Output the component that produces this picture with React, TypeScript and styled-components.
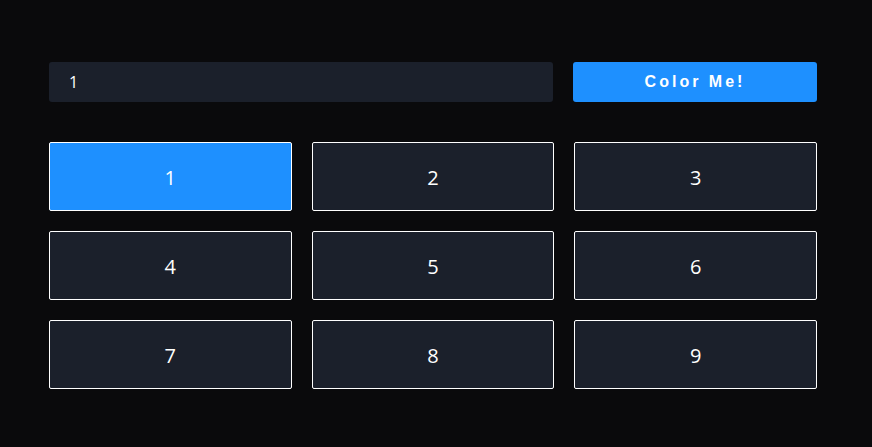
import React, { useState } from "react";
import styled, { createGlobalStyle } from "styled-components";

const GlobalStyle = createGlobalStyle`
  html, body { margin: 0; padding: 0; background: #0a0a0c; }
  body { font-family: "Open Sans", "Noto Sans", sans-serif; }
`;

const Page = styled.div`
  min-height: 447px;
  box-sizing: border-box;
  padding: 62px 55px 0 49px;
`;

const Container = styled.div`
  width: 768px;
  display: flex;
  flex-direction: column;
  gap: 40px;
`;

const Controls = styled.div`
  display: flex;
  gap: 20px;
  height: 40px;
`;

const Input = styled.input`
  flex: 1;
  box-sizing: border-box;
  height: 40px;
  border: none;
  outline: none;
  border-radius: 3px;
  background: #1b202b;
  color: #ffffff;
  font-family: "Open Sans", "Noto Sans", sans-serif;
  font-size: 16px;
  padding: 0 20px;
`;

const Button = styled.button`
  width: 244px;
  height: 40px;
  border: none;
  border-radius: 3px;
  background: #1e90ff;
  color: #ffffff;
  font-family: "Liberation Sans", Arial, sans-serif;
  font-weight: bold;
  font-size: 16px;
  letter-spacing: 3px;
  cursor: pointer;
`;

const Grid = styled.div`
  display: grid;
  grid-template-columns: repeat(3, 1fr);
  gap: 20px;
`;

const Cell = styled.div<{ $active: boolean }>`
  height: 69px;
  box-sizing: border-box;
  padding-top: 2px;
  border: 1px solid #ffffff;
  border-radius: 2px;
  background: ${(p) => (p.$active ? "#1e90ff" : "#1b202b")};
  color: #ffffff;
  font-size: 20px;
  display: flex;
  align-items: center;
  justify-content: center;
`;

export default function App() {
  const [value, setValue] = useState("1");
  const [active, setActive] = useState(1);
  return (
    <>
      <GlobalStyle />
      <Page>
        <Container>
          <Controls>
            <Input value={value} onChange={(e) => setValue(e.target.value)} />
            <Button onClick={() => setActive(Number(value))}>Color Me!</Button>
          </Controls>
          <Grid>
            {[1, 2, 3, 4, 5, 6, 7, 8, 9].map((n) => (
              <Cell key={n} $active={n === active}>
                {n}
              </Cell>
            ))}
          </Grid>
        </Container>
      </Page>
    </>
  );
}
